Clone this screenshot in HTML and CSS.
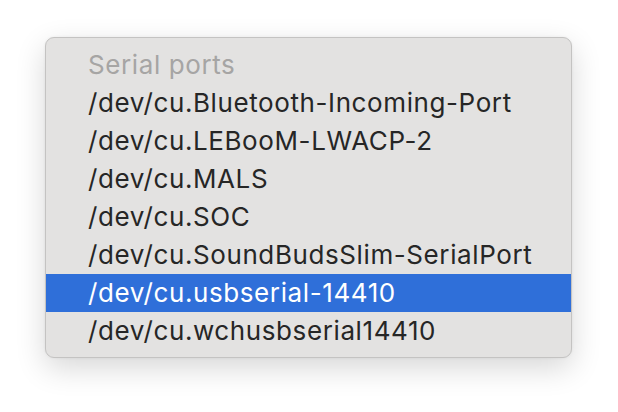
FILE: index.html
```html
<!DOCTYPE html>
<html>
<head>
<meta charset="utf-8">
<link rel="stylesheet" href="styles.css">
</head>
<body>
<div class="page">
  <div class="menu">
    <div class="item header">Serial ports</div>
    <div class="item">/dev/cu.Bluetooth-Incoming-Port</div>
    <div class="item">/dev/cu.LEBooM-LWACP-2</div>
    <div class="item">/dev/cu.MALS</div>
    <div class="item">/dev/cu.SOC</div>
    <div class="item">/dev/cu.SoundBudsSlim-SerialPort</div>
    <div class="item selected">/dev/cu.usbserial-14410</div>
    <div class="item">/dev/cu.wchusbserial14410</div>
  </div>
</div>
</body>
</html>
```
FILE: styles.css
```css
html, body {
  margin: 0;
  padding: 0;
  background: #ffffff;
}
.page {
  width: 618px;
  height: 412px;
  padding: 37px 0 0 45px;
  box-sizing: border-box;
}
.menu {
  width: 527px;
  box-sizing: border-box;
  background: #e3e2e1;
  border: 1px solid #c4c3c2;
  border-radius: 9px;
  padding: 8px 0 7px;
  box-shadow: 0 10px 30px rgba(0, 0, 0, 0.16), 0 0 3px rgba(0, 0, 0, 0.06);
  font-family: Inter, "Noto Sans", sans-serif;
  font-size: 26px;
  letter-spacing: 0.6px;
  color: #262626;
}
.item {
  height: 38px;
  line-height: 38px;
  padding-left: 42px;
  white-space: nowrap;
}
.header {
  color: #a6a5a4;
}
.selected {
  background: #2f6fd9;
  color: #ffffff;
}
```
